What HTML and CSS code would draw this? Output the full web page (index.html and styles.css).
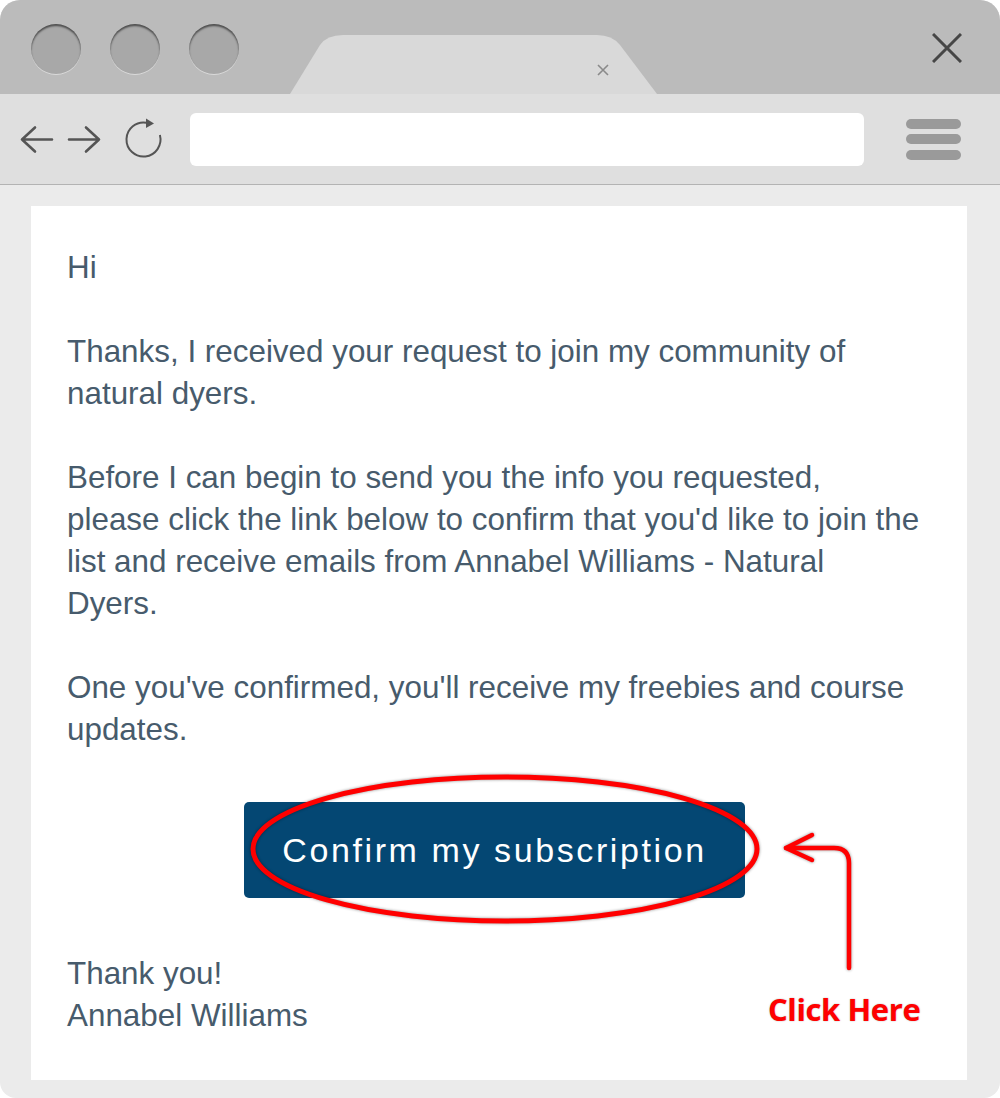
FILE: index.html
```html
<!DOCTYPE html>
<html>
<head>
<meta charset="utf-8">
<link rel="stylesheet" href="styles.css">
</head>
<body>
<div class="window">
  <div class="titlebar">
    <div class="lights">
      <span class="light"></span>
      <span class="light"></span>
      <span class="light"></span>
    </div>
    <svg class="tab" width="368" height="59" viewBox="0 0 368 59">
      <path d="M0 59 L30 10 Q37 0 53 0 L307 0 Q322 0 330 10 L367 59 Z" fill="#d9d9d9"/>
      <path d="M308 30 L318 40 M318 30 L308 40" stroke="#8a8a8a" stroke-width="1.6" fill="none"/>
    </svg>
    <svg class="close" width="30" height="30" viewBox="0 0 30 30">
      <path d="M1 1 L29 29 M29 1 L1 29" stroke="#464646" stroke-width="3" fill="none"/>
    </svg>
  </div>
  <div class="toolbar">
    <svg class="nav" width="150" height="50" viewBox="0 0 150 50">
      <g stroke="#555" stroke-width="2.6" fill="none" stroke-linecap="round" stroke-linejoin="round">
        <path d="M4 25.5 L34 25.5 M17 13.5 L4 25.5 L17 37.5"/>
        <path d="M51 25.5 L81 25.5 M68 13.5 L81 25.5 L68 37.5"/>
      </g>
      <path d="M141.9 21.1 A17 17 0 1 1 128.5 8.8" stroke="#555" stroke-width="2" fill="none"/>
      <path d="M128 4.5 L136 9.5 L128 14 Z" fill="#555"/>
    </svg>
    <div class="address"></div>
    <div class="menu">
      <span></span><span></span><span></span>
    </div>
  </div>
  <div class="content">
    <div class="panel">
      <p class="text">Hi</p>
      <p class="text">Thanks, I received your request to join my community of natural dyers.</p>
      <p class="text">Before I can begin to send you the info you requested, please click the link below to confirm that you'd like to join the list and receive emails from Annabel Williams - Natural Dyers.</p>
      <p class="text">One you've confirmed, you'll receive my freebies and course updates.</p>
      <div class="button">Confirm my subscription</div>
      <p class="text last">Thank you!<br>Annabel Williams</p>
      <svg class="overlay" width="936" height="874" viewBox="0 0 936 874">
        <g class="marks" stroke="#ff0000" fill="none" stroke-linecap="round" stroke-linejoin="round">
          <ellipse cx="474" cy="643" rx="252" ry="72" stroke-width="5"/>
          <path d="M818 762 V657 Q818 642 803 642 H755" stroke-width="4.5"/>
          <path d="M781 629 L755 642 L781 654" stroke-width="4.5"/>
        </g>
      </svg>
      <div class="click">Click Here</div>
    </div>
  </div>
</div>
</body>
</html>
```
FILE: styles.css
```css
html, body {
  margin: 0;
  padding: 0;
  background: #ffffff;
}

.window {
  width: 1000px;
  height: 1098px;
  border-radius: 20px 20px 16px 16px;
  overflow: hidden;
  background: #ebebeb;
  display: flex;
  flex-direction: column;
}

.titlebar {
  height: 94px;
  flex: none;
  background: #bbbbbb;
  display: flex;
  align-items: flex-end;
}

.lights {
  align-self: flex-start;
  margin-top: 24px;
  padding-left: 31px;
  display: flex;
  gap: 29px;
}

.light {
  width: 50px;
  height: 50px;
  border-radius: 50%;
  background: #a8a8a8;
  box-shadow: inset 0 2px 2px rgba(0, 0, 0, 0.55), 0 1px 0 rgba(255, 255, 255, 0.45);
}

.tab {
  display: block;
  margin-left: 51px;
}

.close {
  display: block;
  align-self: flex-start;
  margin: 33px 38px 0 auto;
}

.toolbar {
  height: 90px;
  flex: none;
  background: #dfdfdf;
  border-bottom: 1px solid #b3b3b3;
  display: flex;
  align-items: center;
}

.nav {
  display: block;
  margin-left: 18px;
}

.address {
  width: 674px;
  height: 53px;
  margin-left: 22px;
  background: #ffffff;
  border-radius: 6px;
}

.menu {
  margin-left: auto;
  margin-right: 39px;
  display: flex;
  flex-direction: column;
  gap: 5.5px;
}

.menu span {
  display: block;
  width: 55px;
  height: 10px;
  border-radius: 5px;
  background: #9a9a9a;
}

.content {
  flex: 1;
  padding: 21px 33px 18px 31px;
  display: flex;
}

.panel {
  flex: 1;
  position: relative;
  background: #ffffff;
  padding: 41px 45px 0 36px;
}

.text {
  margin: 0 0 42px;
  font-family: "Liberation Sans", Arial, sans-serif;
  font-size: 31.4px;
  line-height: 42px;
  color: #475b6c;
}

.text.last {
  margin: 0;
}

.button {
  width: 501px;
  height: 96px;
  margin: 51px 0 55px 177px;
  background: #044773;
  border-radius: 5px;
  color: #ffffff;
  font-family: "Liberation Sans", Arial, sans-serif;
  font-size: 34px;
  letter-spacing: 2.6px;
  display: flex;
  align-items: center;
  justify-content: center;
}

.overlay {
  position: absolute;
  left: 0;
  top: 0;
  pointer-events: none;
}

.marks {
  filter: drop-shadow(0 0 1.5px rgba(0, 0, 0, 0.45));
}

.click {
  position: absolute;
  left: 737px;
  top: 788px;
  font-family: "Open Sans", "Noto Sans", sans-serif;
  font-weight: 700;
  font-size: 31px;
  line-height: 30px;
  color: #ff0000;
  letter-spacing: -0.4px;
  text-shadow: 0 0 1.5px rgba(0, 0, 0, 0.35);
}
```
